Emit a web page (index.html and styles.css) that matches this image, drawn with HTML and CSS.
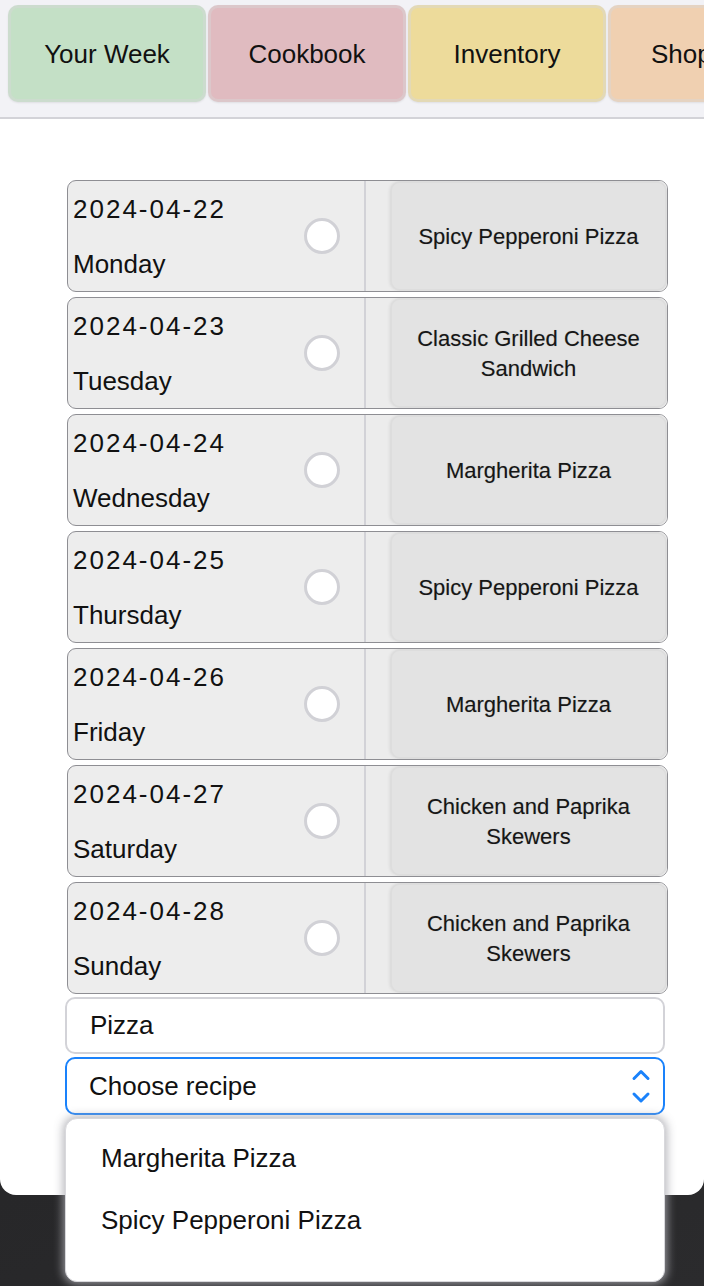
FILE: index.html
```html
<!DOCTYPE html>
<html lang="en">
<head>
<meta charset="utf-8">
<title>Your Week</title>
<link rel="stylesheet" href="styles.css">
</head>
<body>
<div class="app">
  <nav class="tabs">
    <div class="tab tab-week">Your Week</div>
    <div class="tab tab-cook">Cookbook</div>
    <div class="tab tab-inv">Inventory</div>
    <div class="tab tab-shop">Shopping</div>
  </nav>
  <main class="planner">
    <div class="week">
      <div class="day">
        <div class="day-info"><div class="dates"><div class="date">2024-04-22</div><div class="weekday">Monday</div></div><span class="radio"></span></div>
        <div class="meal-cell"><div class="meal">Spicy Pepperoni Pizza</div></div>
      </div>
      <div class="day">
        <div class="day-info"><div class="dates"><div class="date">2024-04-23</div><div class="weekday">Tuesday</div></div><span class="radio"></span></div>
        <div class="meal-cell"><div class="meal">Classic Grilled Cheese Sandwich</div></div>
      </div>
      <div class="day">
        <div class="day-info"><div class="dates"><div class="date">2024-04-24</div><div class="weekday">Wednesday</div></div><span class="radio"></span></div>
        <div class="meal-cell"><div class="meal">Margherita Pizza</div></div>
      </div>
      <div class="day">
        <div class="day-info"><div class="dates"><div class="date">2024-04-25</div><div class="weekday">Thursday</div></div><span class="radio"></span></div>
        <div class="meal-cell"><div class="meal">Spicy Pepperoni Pizza</div></div>
      </div>
      <div class="day">
        <div class="day-info"><div class="dates"><div class="date">2024-04-26</div><div class="weekday">Friday</div></div><span class="radio"></span></div>
        <div class="meal-cell"><div class="meal">Margherita Pizza</div></div>
      </div>
      <div class="day">
        <div class="day-info"><div class="dates"><div class="date">2024-04-27</div><div class="weekday">Saturday</div></div><span class="radio"></span></div>
        <div class="meal-cell"><div class="meal">Chicken and Paprika Skewers</div></div>
      </div>
      <div class="day">
        <div class="day-info"><div class="dates"><div class="date">2024-04-28</div><div class="weekday">Sunday</div></div><span class="radio"></span></div>
        <div class="meal-cell"><div class="meal">Chicken and Paprika Skewers</div></div>
      </div>
    </div>
    <input class="search" type="text" value="Pizza">
    <div class="select">
      <span class="select-label">Choose recipe</span>
      <svg class="chevrons" width="20" height="36" viewBox="0 0 20 36" aria-hidden="true">
        <polyline points="3,10.5 10,3.5 17,10.5" fill="none" stroke="#1a82fb" stroke-width="3" stroke-linecap="round" stroke-linejoin="round"/>
        <polyline points="3,26 10,33 17,26" fill="none" stroke="#1a82fb" stroke-width="3" stroke-linecap="round" stroke-linejoin="round"/>
      </svg>
    </div>
  </main>
</div>
<div class="popup">
  <div class="option">Margherita Pizza</div>
  <div class="option">Spicy Pepperoni Pizza</div>
</div>
</body>
</html>
```
FILE: styles.css
```css
html, body {
  margin: 0;
  padding: 0;
}
body {
  width: 704px;
  height: 1286px;
  overflow: hidden;
  position: relative;
  background: linear-gradient(160deg, #19191b 0%, #222224 50%, #2b2b2d 100%);
  font-family: "Liberation Sans", Arial, sans-serif;
  color: #111;
}
.app {
  background: #fff;
  height: 1195px;
  border-radius: 0 0 16px 16px;
  display: flex;
  flex-direction: column;
}
.tabs {
  box-sizing: border-box;
  height: 119px;
  display: flex;
  gap: 2px;
  padding: 5px 8px 0;
  background: #f2f2f6;
  border-bottom: 2px solid #d3d3d8;
  overflow: hidden;
  flex: 0 0 auto;
}
.tab {
  box-sizing: border-box;
  flex: 0 0 198px;
  height: 97px;
  padding-top: 2px;
  border-radius: 10px;
  border: 3px solid rgba(215, 215, 215, 0.45);
  box-shadow: 0 1px 2px rgba(0, 0, 0, 0.08);
  display: flex;
  align-items: center;
  justify-content: center;
  font-size: 26px;
  color: #111;
  white-space: nowrap;
}
.tab-week { background: #c4e0c6; }
.tab-cook { background: #e0bbc0; }
.tab-inv { background: #eddb9b; }
.tab-shop { background: #f0d0b1; justify-content: flex-start; padding-left: 40px; }

.planner {
  padding: 61px 0 0 65px;
  width: 603px;
  display: flex;
  flex-direction: column;
}
.week {
  display: flex;
  flex-direction: column;
  gap: 5px;
  margin-left: 2px;
}
.day {
  box-sizing: border-box;
  height: 112px;
  display: grid;
  grid-template-columns: 298px 1fr;
  border: 1px solid #8e8e93;
  border-radius: 9px;
  background: #ededed;
  overflow: hidden;
}
.day-info {
  display: flex;
  align-items: center;
  justify-content: space-between;
  padding: 0 24px 0 5px;
  border-right: 2px solid #d2d2d7;
}
.dates {
  align-self: flex-start;
  padding-top: 14px;
  font-size: 26px;
}
.date {
  line-height: 28px;
  letter-spacing: 2px;
}
.weekday {
  line-height: 28px;
  margin-top: 27px;
}
.radio {
  box-sizing: border-box;
  width: 36px;
  height: 36px;
  border-radius: 50%;
  border: 3px solid #d1d1d6;
  background: #fff;
  flex: 0 0 auto;
}
.meal-cell {
  background: #ececec;
  padding-left: 24px;
  display: flex;
}
.meal {
  flex: 1;
  background: #e3e3e3;
  border-radius: 10px;
  box-shadow: inset 0 0 0 2px rgba(0, 0, 0, 0.025), -1px 0 3px rgba(0, 0, 0, 0.06);
  display: flex;
  align-items: center;
  justify-content: center;
  text-align: center;
  padding: 2px 20px 0;
  font-size: 22px;
  line-height: 30px;
  color: #161616;
  text-shadow: 0 0 1px rgba(0, 0, 0, 0.25);
}

.search {
  box-sizing: border-box;
  width: 600px;
  height: 57px;
  margin-top: 3px;
  border: 2px solid #d3d3d8;
  border-radius: 10px;
  padding: 0 23px;
  font-family: "Liberation Sans", Arial, sans-serif;
  font-size: 26px;
  color: #111;
  background: #fff;
  outline: none;
}
.select {
  box-sizing: border-box;
  width: 600px;
  height: 58px;
  margin-top: 3px;
  border: 2px solid #1a82fb;
  border-radius: 10px;
  padding: 0 12px 0 22px;
  display: flex;
  align-items: center;
  justify-content: space-between;
  font-size: 26px;
  color: #111;
}
.chevrons {
  display: block;
}

.popup {
  position: absolute;
  left: 65px;
  top: 1118px;
  box-sizing: border-box;
  width: 600px;
  height: 164px;
  background: #fff;
  border-radius: 12px;
  border: 1px solid #d8d8dc;
  box-shadow: 0 0 10px 2px rgba(170, 170, 176, 0.85);
  padding-top: 8px;
}
.option {
  line-height: 62px;
  padding-left: 35px;
  font-size: 26px;
  color: #111;
}
```
